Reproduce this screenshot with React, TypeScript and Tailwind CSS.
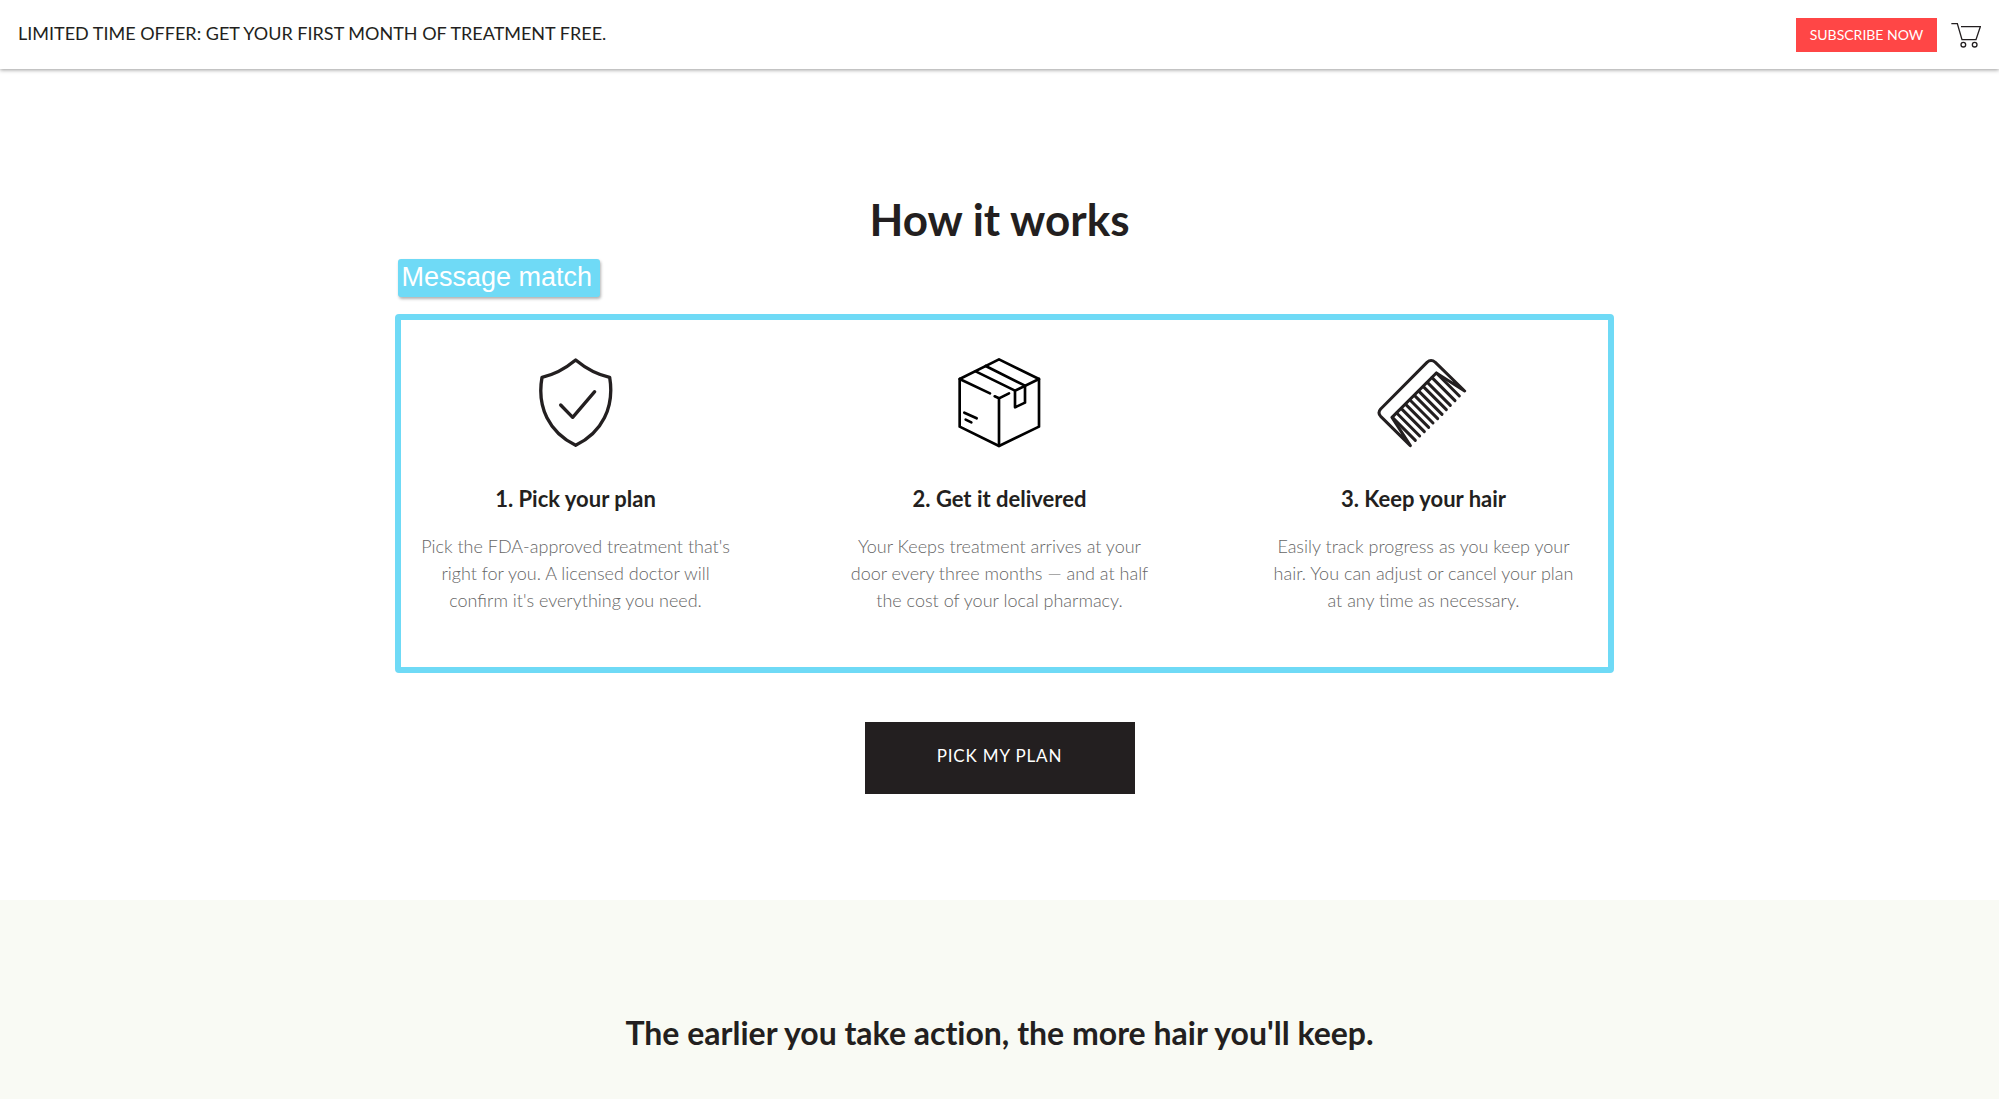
import type { ReactNode } from "react";

const iconProps = {
  viewBox: "45 54 300 270",
  fill: "none",
  stroke: "currentColor",
  strokeLinecap: "round",
  strokeLinejoin: "round",
  "aria-hidden": true,
} as const;

function ShieldIcon() {
  return (
    <svg {...iconProps} strokeWidth="10" className="h-[90px] w-[100px]">
      <path d="M194 60C165 84 129 104 93 112C77 202 115 278 194 316C273 278 311 202 296 112C259 104 223 84 194 60Z" />
      <path d="M149 195L185 232L251 155" />
    </svg>
  );
}

function BoxIcon() {
  return (
    <svg
      {...iconProps}
      strokeWidth="8"
      className="h-[90px] w-[100px] text-black"
    >
      <path d="M192 58L312 117V260L192 318L74 260V117Z" />
      <path d="M192 318V175L179 169M192 175L222 160" />
      <path d="M74 117L165 160" />
      <path d="M122 94L240 152V202L270 188V137L152 78" />
      <path d="M240 152L312 117" />
      <path d="M88 218L125 235M92 239L109 247" />
    </svg>
  );
}

const teeth = [
  [169, 301],
  [182, 288],
  [196, 275],
  [209, 262],
  [222, 249],
  [236, 236],
  [249, 223],
  [262, 209],
  [274, 196],
  [288, 182],
  [301, 168],
];

function CombIcon() {
  return (
    <svg {...iconProps} strokeWidth="9" className="h-[90px] w-[100px]">
      <path d="M154 317L65 229Q55 218 65 207L204 67Q216 56 229 67L317 153L232 99L99 232Z" />
      {teeth.map(([x, y]) => (
        <path key={x} d={`M${x - 69} ${y - 69}L${x} ${y}`} />
      ))}
    </svg>
  );
}

function CartIcon() {
  return (
    <svg
      viewBox="0 0 90 78"
      fill="none"
      stroke="currentColor"
      strokeWidth="4"
      aria-hidden
      className="h-[26px] w-[30px]"
    >
      <path d="M1 5H19L33 53H75L88 14H30" />
      <circle cx="37" cy="68" r="7" />
      <circle cx="71" cy="68" r="7" />
    </svg>
  );
}

type StepProps = { icon: ReactNode; title: string; lines: string[] };

const steps: StepProps[] = [
  {
    icon: <ShieldIcon />,
    title: "1. Pick your plan",
    lines: [
      "Pick the FDA-approved treatment that's",
      "right for you. A licensed doctor will",
      "confirm it's everything you need.",
    ],
  },
  {
    icon: <BoxIcon />,
    title: "2. Get it delivered",
    lines: [
      "Your Keeps treatment arrives at your",
      "door every three months — and at half",
      "the cost of your local pharmacy.",
    ],
  },
  {
    icon: <CombIcon />,
    title: "3. Keep your hair",
    lines: [
      "Easily track progress as you keep your",
      "hair. You can adjust or cancel your plan",
      "at any time as necessary.",
    ],
  },
];

function Step({ icon, title, lines }: StepProps) {
  return (
    <div className="flex flex-col items-center text-center">
      {icon}
      <h3 className="mt-[35px] text-[22px] leading-8 font-bold">{title}</h3>
      <p className="mt-[18px] text-[18px] leading-[27px] font-light text-[#666666]">
        {lines.map((line) => (
          <span key={line} className="block">
            {line}
          </span>
        ))}
      </p>
    </div>
  );
}

export default function App() {
  return (
    <div className="min-h-screen bg-white font-['Lato',sans-serif] text-[#231f20]">
      <header className="flex h-[69px] items-center justify-between px-[18px] shadow-[0_1px_4px_rgba(0,0,0,0.4)]">
        <p className="pb-1 text-[18px] leading-7">
          LIMITED TIME OFFER: GET YOUR FIRST MONTH OF TREATMENT FREE.
        </p>
        <div className="flex items-center gap-[14px]">
          <button
            type="button"
            className="h-[34px] w-[141px] bg-[#ff4646] text-[14px] text-white"
          >
            SUBSCRIBE NOW
          </button>
          <a href="#cart" aria-label="Cart">
            <CartIcon />
          </a>
        </div>
      </header>

      <main>
        <section className="flex flex-col items-center pt-[120px] pb-[106px]">
          <h2 className="text-[44px] leading-[60px] font-bold">How it works</h2>

          <div className="relative mt-[109px] w-full max-w-[1272px]">
            <div className="grid grid-cols-3">
              {steps.map((step) => (
                <Step key={step.title} {...step} />
              ))}
            </div>

            {/* annotation drawn over the steps */}
            <div className="pointer-events-none absolute -top-[44px] right-[22px] -bottom-[59px] left-[31px] rounded-sm border-[6px] border-[#6fdaf6]" />
            <div className="absolute -top-[99px] left-[34px] h-[38px] w-[202px] rounded-[3px] bg-[#6fdaf6] pl-1 font-['Liberation_Sans',sans-serif] text-[27px] leading-[36px] text-white shadow-[1px_2px_3px_rgba(0,0,0,0.3)]">
              Message match
            </div>
          </div>

          <a
            href="#plan"
            className="mt-[108px] flex h-[72px] w-[270px] items-center justify-center bg-[#231f20] pb-1 text-[17px] tracking-wider text-white"
          >
            PICK MY PLAN
          </a>
        </section>

        <section className="bg-[#f9faf4] pt-[111px] pb-11 text-center">
          <h2 className="text-[32px] leading-[44px] font-bold [font-variant-ligatures:no-common-ligatures]">
            The earlier you take action, the more hair you'll keep.
          </h2>
        </section>
      </main>
    </div>
  );
}
